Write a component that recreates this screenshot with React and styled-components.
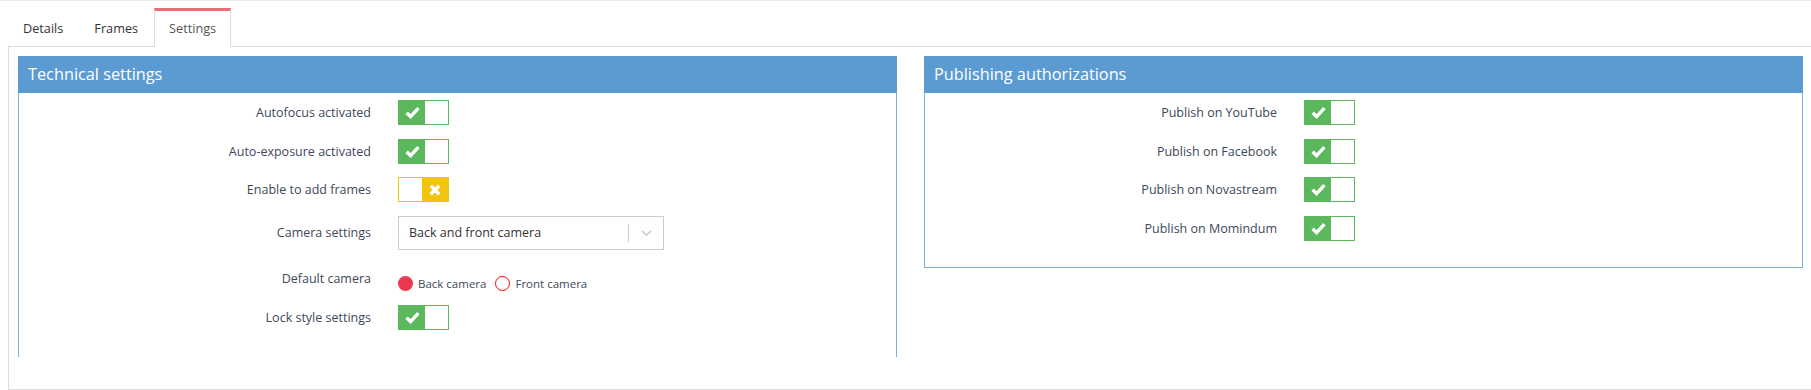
import React from 'react';
import styled, { createGlobalStyle } from 'styled-components';

const GlobalStyle = createGlobalStyle`
  html, body {
    margin: 0;
    padding: 0;
    background: #fff;
    overflow: hidden;
  }
  body {
    font-family: "Open Sans", "Liberation Sans", sans-serif;
  }
`;

// page shell with the thin line at the very top
const Page = styled.div`
  border-top: 1px solid #ececec;
  padding-left: 8px;
  height: 389px;
`;

const TabBar = styled.div`
  display: flex;
  margin-top: 7px;
  margin-bottom: -1px;
`;

const Tab = styled.div`
  position: relative;
  z-index: 1;
  height: 39px;
  box-sizing: border-box;
  display: flex;
  align-items: center;
  padding: 0 15px 3px;
  margin-right: 1px;
  font-size: 12.7px;
  color: ${p => (p.$active ? '#555' : '#333')};
  background: ${p => (p.$active ? '#fff' : 'transparent')};
  border-top: 3px solid ${p => (p.$active ? '#ec6a73' : 'transparent')};
  ${p => p.$active && `
    border-left: 1px solid #ddd;
    border-right: 1px solid #ddd;
    padding: 0 14px 2px;
  `}
`;

const Content = styled.div`
  box-sizing: border-box;
  height: 344px;
  margin-right: -2px;
  border: 1px solid #ddd;
  padding: 9px;
`;

const Columns = styled.div`
  display: grid;
  grid-template-columns: 1fr 1fr;
  column-gap: 27px;
  align-items: start;
`;

const Panel = styled.div`
  display: flex;
  flex-direction: column;
`;

const PanelHeader = styled.div`
  height: 37px;
  background: #5b9bd1;
  color: #fff;
  font-size: 16.3px;
  line-height: 37px;
  padding-left: 10px;
`;

const PanelBody = styled.div`
  border: 1px solid #79b0e0;
  border-top: none;
  ${p => p.$open && 'border-bottom: none;'}
  padding: 7px 0 ${p => p.$pad}px;
  display: flex;
  flex-direction: column;
  gap: 13.5px;
`;

const Row = styled.div`
  display: grid;
  grid-template-columns: 352px 1fr;
  column-gap: 27px;
  align-items: ${p => (p.$top ? 'start' : 'center')};
  min-height: ${p => p.$h || 25}px;
`;

const Label = styled.div`
  text-align: right;
  font-size: 12.5px;
  color: #3d4859;
  padding-top: ${p => p.$pt || 0}px;
`;

const Switch = styled.span`
  box-sizing: border-box;
  display: flex;
  width: 51px;
  height: 25px;
  border: 1px solid ${p => p.$color};
  background: #fff;
`;

const Knob = styled.span`
  width: 26px;
  height: 100%;
  display: flex;
  align-items: center;
  justify-content: center;
  background: ${p => p.$color};
  ${p => p.$right && 'margin-left: auto;'}
`;

const Select = styled.div`
  box-sizing: border-box;
  width: 266px;
  height: 34px;
  border: 1px solid #ccc;
  display: flex;
  align-items: center;
  padding-left: 10px;
  font-size: 12.5px;
  color: #333;
`;

const SelectValue = styled.span`
  flex: 1;
`;

const SelectSep = styled.span`
  width: 1px;
  height: 18px;
  background: #ccc;
`;

const SelectArrow = styled.span`
  width: 34px;
  display: flex;
  justify-content: center;
`;

const RadioGroup = styled.div`
  display: flex;
  align-items: center;
  padding-top: 13px;
`;

const RadioItem = styled.label`
  display: flex;
  align-items: center;
  gap: 5px;
  margin-right: 9px;
  font-size: 11.5px;
  color: #3d4859;
`;

const RadioDot = styled.span`
  box-sizing: border-box;
  width: 15px;
  height: 15px;
  border-radius: 50%;
  background: ${p => (p.$checked ? '#ea3a50' : '#fff')};
  border: ${p => (p.$checked ? 'none' : '1.5px solid #f00')};
`;

const Check = () => (
  <svg width="15" height="13" viewBox="0 0 15 13">
    <path d="M1.6 6.8 L5.6 10.6 L13.4 2.2" fill="none" stroke="#fff" strokeWidth="3.4" />
  </svg>
);

const Cross = () => (
  <svg width="12" height="12" viewBox="0 0 12 12">
    <path d="M1.8 1.8 L10.2 10.2 M10.2 1.8 L1.8 10.2" fill="none" stroke="#fff" strokeWidth="3.4" />
  </svg>
);

const Toggle = ({ on }) =>
  on ? (
    <Switch $color="#5cb85c">
      <Knob $color="#5cb85c"><Check /></Knob>
    </Switch>
  ) : (
    <Switch $color="#f1c40f">
      <Knob $color="#f1c40f" $right><Cross /></Knob>
    </Switch>
  );

const ToggleRow = ({ label, on = true }) => (
  <Row>
    <Label>{label}</Label>
    <div><Toggle on={on} /></div>
  </Row>
);

const App = () => (
  <Page>
    <GlobalStyle />
    <TabBar>
      <Tab>Details</Tab>
      <Tab>Frames</Tab>
      <Tab $active>Settings</Tab>
    </TabBar>
    <Content>
      <Columns>
        <Panel>
          <PanelHeader>Technical settings</PanelHeader>
          <PanelBody $open $pad={27}>
            <ToggleRow label="Autofocus activated" />
            <ToggleRow label="Auto-exposure activated" />
            <ToggleRow label="Enable to add frames" on={false} />
            <Row $h={34}>
              <Label>Camera settings</Label>
              <div>
                <Select>
                  <SelectValue>Back and front camera</SelectValue>
                  <SelectSep />
                  <SelectArrow>
                    <svg width="11" height="6" viewBox="0 0 11 6">
                      <path d="M0.8 0.8 L5.5 5 L10.2 0.8" fill="none" stroke="#ccc" strokeWidth="1.6" />
                    </svg>
                  </SelectArrow>
                </Select>
              </div>
            </Row>
            <Row $top $h={27}>
              <Label $pt={7}>Default camera</Label>
              <RadioGroup>
                <RadioItem><RadioDot $checked />Back camera</RadioItem>
                <RadioItem><RadioDot />Front camera</RadioItem>
              </RadioGroup>
            </Row>
            <ToggleRow label="Lock style settings" />
          </PanelBody>
        </Panel>
        <Panel>
          <PanelHeader>Publishing authorizations</PanelHeader>
          <PanelBody $pad={26}>
            <ToggleRow label="Publish on YouTube" />
            <ToggleRow label="Publish on Facebook" />
            <ToggleRow label="Publish on Novastream" />
            <ToggleRow label="Publish on Momindum" />
          </PanelBody>
        </Panel>
      </Columns>
    </Content>
  </Page>
);

export default App;
